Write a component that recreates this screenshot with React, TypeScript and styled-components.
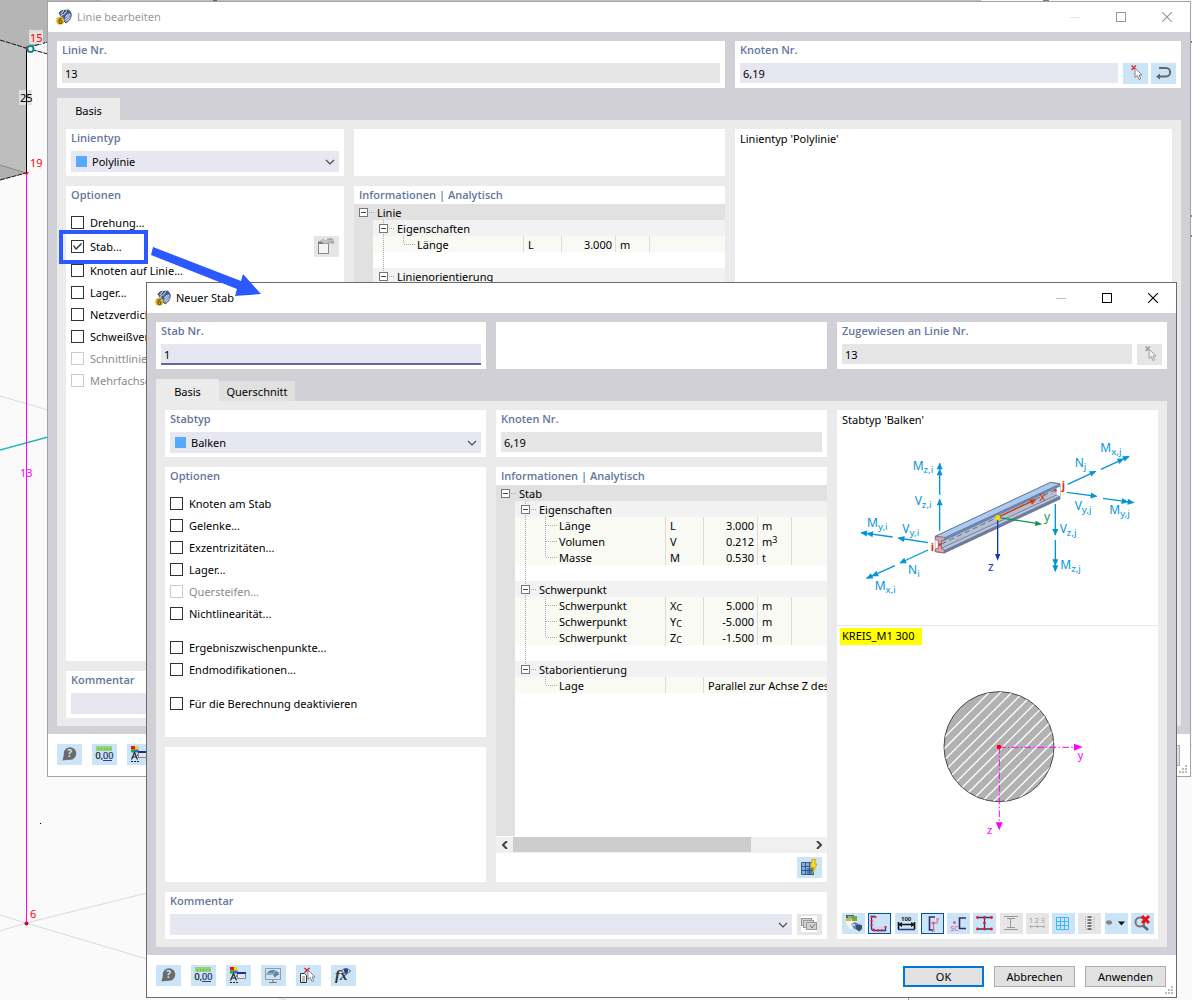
import React, { useId } from 'react';
import styled, { createGlobalStyle, css } from 'styled-components';

const c = {
  frame: '#d1d0d6',
  page: '#ebebeb',
  heading: '#64769e',
  field: '#e7e7f2',
  readOnly: '#e6e6e6',
  accent: '#cce4f7',
  force: '#0095db',
  magenta: '#ff00ff',
};

const GlobalStyle = createGlobalStyle`
  *, *::before, *::after { box-sizing: border-box; }
  body {
    margin: 0;
    background: #fafafa;
    color: #000;
    font-family: "Noto Sans", "Open Sans", sans-serif;
    font-size: 11px;
    line-height: 16px;
  }
  button, input, select { font: inherit; color: inherit; margin: 0; }
`;

/* ---------- desktop and windows ---------- */

const Desktop = styled.main`
  position: relative;
  min-height: 100vh;
  overflow: hidden;
`;

const Scene = styled.svg`
  position: absolute;
  inset: 0;
  width: 100%;
  height: 100%;
`;

const Annotation = styled(Scene)`
  pointer-events: none;
`;

const Dialog = styled.section<{ $active?: boolean; $left: number; $right: number; $top: number }>`
  position: absolute;
  top: ${p => p.$top}px;
  left: ${p => p.$left}px;
  right: ${p => p.$right}px;
  border: 1px solid ${p => (p.$active ? '#6b6b6e' : '#a3a3a6')};
  background: #fff;
`;

const TitleBar = styled.header<{ $active?: boolean }>`
  display: flex;
  align-items: center;
  height: 30px;
  padding-left: 8px;
  gap: 5px;
  color: ${p => (p.$active ? '#000' : '#999')};
`;

const Title = styled.h1`
  flex: 1;
  margin: 0;
  font: inherit;
`;

const WindowButtons = styled.div`
  display: flex;
`;

const WindowButton = styled.button`
  display: grid;
  place-items: center;
  width: 46px;
  height: 28px;
  padding: 0;
  border: 0;
  background: none;
  &:disabled { opacity: 0.25; }
`;

const Body = styled.div`
  padding: 9px 9px 8px;
  background: ${c.frame};
`;

const Columns = styled.div<{ $columns: string }>`
  display: grid;
  grid-template-columns: ${p => p.$columns};
  gap: 10px;
`;

const HeaderRow = styled(Columns)`
  margin-bottom: 10px;
`;

const Page = styled(Columns)`
  padding: 9px 9px 8px;
  background: ${c.page};
`;

const Tabs = styled.div`
  display: flex;
  align-items: flex-end;
  height: 22px;
`;

const Tab = styled.button<{ $selected?: boolean }>`
  width: ${p => (p.$selected ? 63 : 76)}px;
  height: ${p => (p.$selected ? 22 : 20)}px;
  padding: ${p => (p.$selected ? 4 : 2)}px 0 0;
  border: 0;
  background: ${p => (p.$selected ? c.page : '#e0e0e0')};
`;

const Column = styled.div`
  display: flex;
  flex-direction: column;
  gap: 10px;
  min-width: 0;
`;

/* ---------- cards and fields ---------- */

const Card = styled.section<{ $minHeight?: number; $grow?: boolean; $wide?: boolean }>`
  display: flex;
  flex-direction: column;
  min-width: 0;
  min-height: ${p => p.$minHeight ?? 47}px;
  background: #fff;
  ${p => p.$grow && css`flex: 1;`}
  ${p => p.$wide && css`grid-column: span 2;`}
`;

const headingStyle = css`
  margin: 0;
  padding: 0 5px;
  font-family: "Open Sans", "Noto Sans", sans-serif;
  font-size: 11px;
  font-weight: 600;
  line-height: 18px;
  color: ${c.heading};
`;

const Heading = styled.h2`${headingStyle}`;
const FieldLabel = styled.label`${headingStyle}`;

const FieldRow = styled.div`
  display: flex;
  gap: 5px;
  padding: 4px 5px 0;
`;

const TextInput = styled.input<{ $focused?: boolean }>`
  flex: 1;
  min-width: 0;
  height: ${p => (p.$focused ? 21 : 20)}px;
  padding: ${p => (p.$focused ? 2 : 1)}px 3px 0;
  border: 0;
  border-bottom: ${p => (p.$focused ? '2px solid #6464a8' : '0')};
  border-radius: 0;
  outline: 0;
  background: ${c.field};
  &:read-only { background: ${c.readOnly}; }
`;

const SelectBox = styled.div`
  display: flex;
  align-items: center;
  flex: 1;
  gap: 5px;
  min-width: 0;
  height: 21px;
  padding: 0 4px 0 5px;
  background: ${c.field};
`;

const Swatch = styled.span`
  width: 11px;
  height: 11px;
  background: #55aaff;
`;

const Select = styled.select`
  flex: 1;
  min-width: 0;
  height: 21px;
  padding: 0;
  border: 0;
  outline: 0;
  appearance: none;
  background: none;
`;

const ButtonGroup = styled.div<{ $gap?: number }>`
  display: flex;
  gap: ${p => p.$gap ?? 3}px;
`;

const IconButton = styled.button`
  flex: none;
  width: 25px;
  height: 21px;
  padding: 0;
  border: 0;
  background: ${c.accent};
  &:disabled { background: ${c.readOnly}; }
  svg { display: block; }
`;

const ToolButton = styled.button<{ $pressed?: boolean }>`
  width: 23px;
  height: 21px;
  padding: 0;
  border: 0;
  outline: ${p => (p.$pressed ? '1px solid #00539c' : '0')};
  outline-offset: -1px;
  background: ${c.accent};
  &:disabled { background: ${c.readOnly}; }
  svg { display: block; }
`;

/* ---------- options ---------- */

const OptionList = styled.div`
  display: flex;
  flex-direction: column;
  gap: 12px;
  padding: 8px 5px 22px;
`;

const OptionGroup = styled.div``;

const OptionRow = styled.div<{ $tall?: boolean }>`
  display: flex;
  align-items: center;
  justify-content: space-between;
  height: ${p => (p.$tall ? 26 : 22)}px;
  > button { margin-bottom: 1px; }
`;

const OptionLabel = styled.label<{ $disabled?: boolean }>`
  display: flex;
  align-items: center;
  gap: 6px;
  white-space: nowrap;
  color: ${p => (p.$disabled ? '#8a8a8a' : '#000')};
`;

const Checkbox = styled.input`
  appearance: none;
  width: 13px;
  height: 13px;
  border: 1px solid #333;
  background: #fff;
  && { margin: 0 0 1px; }
  &:disabled { border-color: #ccc; }
  &:checked::before {
    content: '';
    display: block;
    width: 11px;
    height: 11px;
    background: #333;
    clip-path: polygon(1px 5px, 2px 4px, 4px 7px, 9px 2px, 10px 3px, 4px 9px);
  }
`;

/* ---------- information tree ---------- */

const TreeArea = styled.div`
  flex: 1;
  overflow: hidden;
  background: linear-gradient(to right, #e1e1e1 19px, #fff 19px);
`;

const TreeTable = styled.table`
  width: 100%;
  table-layout: fixed;
  border-collapse: separate;
  border-spacing: 0;
  white-space: nowrap;
`;

const Col = styled.col<{ $width?: number }>`
  width: ${p => (p.$width ? `${p.$width}px` : 'auto')};
`;

const TreeRow = styled.tr<{ $level: number }>`
  height: 16px;
  background: ${p => ['#fff', '#e1e1e1', '#f2f2f2', '#f9faf4'][p.$level]};
`;

const Cell = styled.td<{ $rule?: boolean; $align?: string }>`
  height: 16px;
  padding: 2px ${p => (p.$align === 'right' ? 3 : 0)}px 0 4px;
  border-right: ${p => (p.$rule ? '1px solid #dcdcdc' : '0')};
  text-align: ${p => p.$align ?? 'left'};
  line-height: 14px;
  overflow: hidden;
  sub, sup { font-size: 9px; line-height: 8px; }
  sub { vertical-align: -1px; }
  sup { vertical-align: 3px; }
`;

const NodeCell = styled(Cell)`
  padding: 0;
`;

const Gutter = styled.td`
  padding: 0;
  background: #e1e1e1;
`;

const Node = styled.span`
  display: flex;
  height: 16px;
`;

const NodeName = styled.span`
  padding-top: 2px;
  line-height: 14px;
`;

const ScrollBar = styled.div`
  display: flex;
  height: 16px;
  margin-top: 1px;
  background: #f0f0f0;
`;

const ScrollArrow = styled.button`
  display: grid;
  place-items: center;
  width: 17px;
  height: 15px;
  padding: 0;
  border: 0;
  background: none;
`;

const ScrollTrack = styled.div`
  flex: 1;
  height: 15px;
`;

const ScrollThumb = styled.div`
  width: 80%;
  height: 15px;
  background: #cdcdcd;
`;

const CardActions = styled.div`
  display: flex;
  justify-content: flex-end;
  padding: 4px 5px;
`;

/* ---------- preview ---------- */

const Caption = styled.p`
  margin: 0;
  padding: 1px 5px 3px;
  line-height: 18px;
`;

const Preview = styled.div`
  height: 216px;
  border-bottom: 1px solid #e6e6e6;
`;

const Drawing = styled.svg`
  display: block;
  width: 100%;
`;

const SectionName = styled.span`
  align-self: flex-start;
  min-width: 82px;
  margin: 2px 3px 0;
  padding: 0 2px 2px;
  background: #ff0;
  line-height: 15px;
`;

const ToolStrip = styled.div`
  display: flex;
  justify-content: space-between;
  margin-top: auto;
  padding: 5px 4px 5px 5px;
`;

/* ---------- footer ---------- */

const Footer = styled.footer`
  display: flex;
  justify-content: space-between;
  padding: 10px 10px 10px 9px;
`;

const PushButton = styled.button<{ $primary?: boolean }>`
  width: 81px;
  height: 21px;
  margin-top: 1px;
  padding: 0;
  border: ${p => (p.$primary ? '2px solid #0078d7' : '1px solid #adadad')};
  background: #e1e1e1;
`;

const Grip = styled.svg`
  position: absolute;
  right: 2px;
  bottom: 2px;
`;

/* ---------- icons ---------- */

const AppIcon = () => (
  <svg width="16" height="16" viewBox="0 0 16 16" aria-hidden="true">
    <path d="M3 4 7 1 13 0.500 15.500 4 14.500 9 10 14 5 10Z" fill="#4a6390" />
    <path d="M3 5C4 2 6 1 9 1.500M6 6C7 3 9 2 12 2.500" stroke="#22345a" strokeWidth="1" fill="none" />
    <path d="M5 5 8 1.200M7.500 5.500 11 1.500M4.500 8 7 5" stroke="#c9d8ee" strokeWidth="1.100" />
    <path d="M8 12C7.500 8 9.500 4.500 13.500 3.500L15.200 5C15.500 9 13.500 12 10 14Z" fill="#7f98c2" stroke="#22345a" strokeWidth="0.700" />
    <path d="M9.500 11 14 5M11 12 14.500 8M9.500 8 12 5" stroke="#dbe6f5" strokeWidth="0.800" />
    <circle cx="4.200" cy="11.700" r="4" fill="#e4b92e" />
    <text x="2" y="15" fontSize="8" fontWeight="700" fill="#6b5410">6</text>
  </svg>
);

const Chevron = () => (
  <svg width="10" height="6" viewBox="0 0 10 6" fill="none" stroke="#444" strokeWidth="1.1" aria-hidden="true">
    <path d="M1 1 5 5 9 1" />
  </svg>
);

const Icon = ({ children, w = 25 }: { children: React.ReactNode; w?: number }) => (
  <svg width={w} height="21" viewBox={`0 0 ${w} 21`} fill="none" aria-hidden="true">{children}</svg>
);

const cursorPath = 'M0 0V9.500L2.200 7.500 4 11.500 5.700 10.700 4 7H7Z';

const PickIcon = ({ off }: { off?: boolean }) => (
  <Icon>
    <path d="M8.500 2.500 13 7M13 2.500 8.500 7" stroke={off ? '#999' : '#e0202a'} strokeWidth="1.4" />
    <path d={cursorPath} transform="translate(12 5)" fill={off ? '#eee' : '#fff'} stroke={off ? '#999' : '#777'} strokeWidth="0.9" />
  </Icon>
);

const ReturnIcon = () => (
  <Icon>
    <path d="M8 5H15C20.500 5 20.500 13.500 15 13.500H8" stroke="#666" strokeWidth="2" />
    <path d="M5 13.500 9 10.500V16.500Z" fill="#666" />
  </Icon>
);

const NewItemIcon = () => (
  <Icon>
    <rect x="4.500" y="7.500" width="10" height="10" fill="#f5f5f5" stroke="#888" />
    <path d="M4 6.500H11" stroke="#777" strokeWidth="2" />
    <path d="M6 5 9 3 12 5 14 3 19 3 20 8 17 7 14 7 11 8Z" fill="#c4c4c4" stroke="#aaa" strokeWidth="0.6" />
    <path d="M13 3H18M15 6H20" stroke="#999" />
  </Icon>
);

const HelpIcon = () => (
  <Icon>
    <circle cx="13" cy="9.500" r="6.300" fill="#6b6b6b" />
    <path d="M7 10 5.500 16.500 13 15.500Z" fill="#6b6b6b" />
    <text x="10.300" y="13" fontSize="10" fontWeight="700" fill={c.accent}>?</text>
  </Icon>
);

const UnitsIcon = () => (
  <Icon>
    <rect x="4" y="2" width="16" height="5" fill="#92d47c" />
    <path d="M6.500 4V6M9.500 4V6M12.500 4V6M15.500 4V6M18.500 4V6" stroke="#5fae52" strokeWidth="0.8" />
    <text x="3.500" y="15" fontSize="9" fill="#111" stroke="#111" strokeWidth="0.2">0,<tspan fill="#2b3f8f">00</tspan></text>
    <path d="M11 16.500H20" stroke="#2b3f8f" />
  </Icon>
);

const DisplayIcon = () => (
  <Icon>
    <rect x="4" y="2" width="4" height="3.500" fill="#e8141c" />
    <rect x="8" y="2" width="3.500" height="3.500" fill="#f3d90b" />
    <rect x="4" y="5.500" width="4" height="3" fill="#1fb325" />
    <rect x="8" y="5.500" width="3.500" height="3" fill="#3c62e0" />
    <path d="M4.500 15.500 7.500 8.500 10.500 15.500M5.500 13H9.500M10 11H13" stroke="#222" strokeWidth="1.200" />
    <path d="M4 17.500H12" stroke="#222" strokeDasharray="2 1" />
    <rect x="11.500" y="7.500" width="8" height="6" fill="#dfe5ee" stroke="#888" />
    <path d="M11 8H20" stroke="#202e8c" strokeWidth="2" />
  </Icon>
);

const MonitorIcon = () => (
  <Icon>
    <path d="M4.500 3.500H19.500V14.500H4.500Z" stroke="#999" />
    <path d="M12 15V17M8 17.500H16" stroke="#777" strokeWidth="1.200" />
    <path d="M5 10C7 4 15 3 18.500 9L13.500 12.500 12 9.500Z" fill="#5e86ad" />
    <path d="M5 10C7 8 10 8 12 9.500L15 5" stroke="#c8dcee" strokeWidth="0.7" />
  </Icon>
);

const ListPickIcon = () => (
  <Icon>
    <path d="M4.500 8.500H8.500L10.500 10.500V17.500H4.500Z" fill="#fff" stroke="#333" />
    <path d="M6 12H9M6 14H9M6 16H9" stroke="#555" strokeWidth="0.8" />
    <path d="M8.500 3 13.500 7.500M13.500 3 8.500 7.500" stroke="#e0202a" strokeWidth="1.400" />
    <path d={cursorPath} transform="translate(12 5)" fill="#fff" stroke="#777" strokeWidth="0.9" />
  </Icon>
);

const FormulaIcon = () => (
  <Icon>
    <text x="4" y="15" fontFamily="Liberation Serif, serif" fontStyle="italic" fontWeight="700" fontSize="15" fill="#333">fx</text>
    <path d="M10.500 6C12 3 17.500 3 19.500 6 17.500 9 12 9 10.500 6Z" fill="#dfe3f3" stroke="#2f3b78" strokeWidth="0.9" />
    <circle cx="15" cy="5.800" r="2.200" fill="#2f3b78" />
  </Icon>
);

const GridFlashIcon = () => (
  <Icon>
    <rect x="4.500" y="5.500" width="12" height="12" fill="#7fb0e0" />
    <path d="M10 11H17V18H10Z" fill="#5580b0" />
    <path d="M4.500 5.500H16.500V17.500H4.500ZM8.500 5.500V17.500M12.500 5.500V17.500M4.500 9.500H16.500M4.500 13.500H16.500" stroke="#33527c" strokeWidth="0.9" />
    <path d="M15 2.500H19L17.500 7H20L15.500 17 16.500 10.500H13.500Z" fill="#ffd91c" stroke="#c99a0a" strokeWidth="0.7" />
  </Icon>
);

const CardsIcon = () => (
  <Icon>
    <rect x="4" y="2" width="16" height="16" fill="#fff" />
    <g fill="#d2d2d2" stroke="#999">
      <rect x="4.500" y="4.500" width="10" height="7" />
      <rect x="6.500" y="6.500" width="10" height="7" />
      <rect x="9.500" y="8.500" width="10" height="7" />
    </g>
    <path d="M13 11 15 14 18 10" stroke="#777" />
  </Icon>
);

const toolIcons: { name: string; pressed?: boolean; disabled?: boolean; art: React.ReactNode }[] = [
  {
    name: 'Rendering',
    art: (
      <>
        <path d="M4 2H15V13H4Z" fill="#e6eef0" />
        <path d="M4 8H14V16H7Z" fill="#f1f4f2" />
        <path d="M4 2H12V5H4Z" fill="#3f6f58" /><path d="M9 3H15V8H10Z" fill="#6fae3c" /><path d="M4 5H9V8H4Z" fill="#d7b63e" /><path d="M6 3H9V5H6Z" fill="#7fb0d0" />
        <path d="M9 11 13 9 19 12 18 17 12 16Z" fill="#6486ad" /><path d="M14 12 20 12V16L17 18.500 14 16Z" fill="#37536f" /><path d="M10 11H13V13H10Z" fill="#b9cfe6" />
      </>
    ),
  },
  {
    name: 'Stresspunkte', pressed: true,
    art: (
      <>
        <path d="M3.500 3.500H7.500V12C7.500 13 8 13.500 9 13.500H17.500V17.500H6C4.500 17.500 3.500 16.500 3.500 15Z" fill="#d5d3f5" />
        <path d="M7.500 3.500H3.500V15C3.500 16.500 4.500 17.500 6 17.500H17.500V13.500" stroke="#2b3a70" strokeWidth="1.300" />
        <path d="M3.500 2.500V5M3.500 7V9M3.500 11V13M5 16 7 18M9 17.500H11M13 17.500H15M17.500 13V15M7.500 3V5" stroke="#e8202a" strokeWidth="1.800" />
      </>
    ),
  },
  {
    name: 'Abmessungen',
    art: (
      <>
        <text x="6" y="8" fontSize="6" fontWeight="700" fill="#222">100</text>
        <path d="M3.500 9V16M19.500 9V16M3.500 11.500H19.500" stroke="#111" strokeWidth="1.600" />
        <path d="M3 11.500 7 9V14ZM20 11.500 16 9V14Z" fill="#111" />
        <path d="M3 16.500H20" stroke="#2b3a70" strokeWidth="1.500" />
      </>
    ),
  },
  {
    name: 'Hauptachsen', pressed: true,
    art: (
      <>
        <path d="M14 4H8.500V17H12" stroke="#2b3060" strokeWidth="1.600" />
        <path d="M10 10H17M12.500 10V17" stroke="#e0609a" strokeWidth="1.100" />
        <circle cx="12.500" cy="10" r="1.500" fill="#e0609a" />
        <text x="15" y="8" fontSize="6" fontWeight="700" fill="#e0609a">y</text>
        <text x="11" y="19" fontSize="6" fontWeight="700" fill="#e0609a">z</text>
      </>
    ),
  },
  {
    name: 'Schubmittelpunkt',
    art: (
      <>
        <path d="M19 5H12.500V15.500H19" stroke="#2b3060" strokeWidth="1.600" />
        <circle cx="7.500" cy="9.500" r="1.500" fill="#e0609a" />
        <text x="3.500" y="17.500" fontSize="7" fill="#d0508a">SC</text>
      </>
    ),
  },
  {
    name: 'Profilteile',
    art: (
      <>
        <path d="M4.500 4.500H18.500M11.500 4.500V16M4.500 16H18.500" stroke="#2b3a70" strokeWidth="1.300" />
        <g fill="#f01818"><circle cx="4.500" cy="4.500" r="1.400" /><circle cx="11.500" cy="4.500" r="1.400" /><circle cx="18.500" cy="4.500" r="1.400" /><circle cx="11.500" cy="10" r="1.400" /><circle cx="4.500" cy="16" r="1.400" /><circle cx="11.500" cy="16" r="1.400" /><circle cx="18.500" cy="16" r="1.400" /></g>
      </>
    ),
  },
  {
    name: 'Elemente', disabled: true,
    art: <path d="M4 3.500H18M7 5.500H15M10.500 5.500V14.500M7 14.500H15M4 16.500H18" stroke="#999" />,
  },
  {
    name: 'Nummerierung', disabled: true,
    art: (
      <>
        <text x="3" y="10" fontSize="7" fill="#999">1 2 3</text>
        <path d="M4 13.500H18M4.500 12V15M11.500 12V15M18 12V15" stroke="#aaa" />
      </>
    ),
  },
  {
    name: 'Raster',
    art: <path d="M4.500 4.500H16.500V16.500H4.500ZM8.500 4.500V16.500M12.500 4.500V16.500M4.500 8.500H16.500M4.500 12.500H16.500" stroke="#45b5f5" />,
  },
  {
    name: 'Tabelle', disabled: true,
    art: (
      <>
        <path d="M7.500 4V18M16 4V18" stroke="#aaa" strokeDasharray="1 1" />
        <path d="M11.500 3V18" stroke="#777" strokeWidth="4" strokeDasharray="2 1" />
      </>
    ),
  },
  {
    name: 'Drucken',
    art: (
      <>
        <path d="M2 7H6V12H2Z" fill="#aaa" /><path d="M1 9.500H7" stroke="#777" strokeWidth="2" /><path d="M13 8.500H20L16.500 12.500Z" fill="#111" />
      </>
    ),
  },
  {
    name: 'Zoom zurücksetzen',
    art: (
      <>
        <circle cx="9" cy="9" r="4.500" stroke="#777" strokeWidth="2" />
        <path d="M12 12.500 17 17" stroke="#666" strokeWidth="2.500" />
        <path d="M11 3 18 10M18 3 11 10" stroke="#e81010" strokeWidth="3" />
      </>
    ),
  },
];

/* ---------- shared parts ---------- */

const MinusBox = ({ x }: { x: number }) => (
  <>
    <rect x={x + 0.5} y="4.500" width="8" height="8" fill="#fff" stroke="#777" />
    <path d={`M${x + 2} 8.500H${x + 7}`} stroke="#444" />
  </>
);

type TreeItem = {
  level: 0 | 1 | 2 | 3;
  name?: string;
  symbol?: React.ReactNode;
  value?: string;
  unit?: React.ReactNode;
  last?: boolean;
  text?: string;
};

const dots = { stroke: '#aaa', strokeDasharray: '1 1', fill: 'none' };

const Tree = ({ items, label }: { items: TreeItem[]; label: string }) => {
  const lastGroup = items.map(i => i.level).lastIndexOf(2);
  return (
    <TreeTable aria-label={label}>
      <colgroup>
        <Col $width={19} /><Col $width={151} /><Col $width={38} /><Col $width={54} /><Col $width={34} /><Col />
      </colgroup>
      <tbody>
        {items.map((it, i) => {
          if (it.level === 1) {
            return (
              <TreeRow key={i} $level={1}>
                <NodeCell colSpan={6}>
                  <Node>
                    <svg width="23" height="16" aria-hidden="true"><MinusBox x={5} /><path d="M15 8.500H20" {...dots} /></svg>
                    <NodeName>{it.name}</NodeName>
                  </Node>
                </NodeCell>
              </TreeRow>
            );
          }
          if (it.level === 2) {
            return (
              <TreeRow key={i} $level={2}>
                <Gutter />
                <NodeCell colSpan={5}>
                  <Node>
                    <svg width="24" height="16" aria-hidden="true">
                      <path d={i === lastGroup ? 'M10.500 0V4' : 'M10.500 0V16'} {...dots} />
                      <MinusBox x={6} />
                      <path d="M16 8.500H22" {...dots} />
                    </svg>
                    <NodeName>{it.name}</NodeName>
                  </Node>
                </NodeCell>
              </TreeRow>
            );
          }
          const trunk = i < lastGroup ? 'M10.500 0V16' : '';
          if (it.level === 0) {
            return (
              <TreeRow key={i} $level={0}>
                <Gutter />
                <NodeCell colSpan={5}>
                  <Node><svg width="24" height="16" aria-hidden="true"><path d={trunk} {...dots} /></svg></Node>
                </NodeCell>
              </TreeRow>
            );
          }
          return (
            <TreeRow key={i} $level={3}>
              <Gutter />
              <NodeCell $rule>
                <Node>
                  <svg width="44" height="16" aria-hidden="true">
                    <path d={`${trunk}M30.500 0V${it.last ? 8 : 16}M31 8.500H42`} {...dots} />
                  </svg>
                  <NodeName>{it.name}</NodeName>
                </Node>
              </NodeCell>
              <Cell $rule>{it.symbol}</Cell>
              {it.text ? (
                <Cell colSpan={3}>{it.text}</Cell>
              ) : (
                <>
                  <Cell $rule $align="right">{it.value}</Cell>
                  <Cell $rule>{it.unit}</Cell>
                  <Cell />
                </>
              )}
            </TreeRow>
          );
        })}
      </tbody>
    </TreeTable>
  );
};

const Option = ({ label, checked, disabled }: { label: string; checked?: boolean; disabled?: boolean }) => (
  <OptionLabel $disabled={disabled}>
    <Checkbox type="checkbox" defaultChecked={checked} disabled={disabled} />
    {label}
  </OptionLabel>
);

type FieldProps = { label: string; value: string; readOnly?: boolean; focused?: boolean; children?: React.ReactNode };

const Field = ({ label, value, readOnly, focused, children }: FieldProps) => {
  const id = useId();
  return (
    <Card>
      <FieldLabel htmlFor={id}>{label}</FieldLabel>
      <FieldRow>
        <TextInput id={id} defaultValue={value} readOnly={readOnly} $focused={focused} />
        {children}
      </FieldRow>
    </Card>
  );
};

const Choice = ({ label, value, wide, children }: { label: string; value?: string; wide?: boolean; children?: React.ReactNode }) => {
  const id = useId();
  return (
    <Card $wide={wide}>
      <FieldLabel htmlFor={id}>{label}</FieldLabel>
      <FieldRow>
        <SelectBox>
          {value && <Swatch />}
          <Select id={id} defaultValue={value ?? ''}>
            <option value={value ?? ''}>{value ?? ''}</option>
          </Select>
          <Chevron />
        </SelectBox>
        {children}
      </FieldRow>
    </Card>
  );
};

const Bar = ({ title, active }: { title: string; active?: boolean }) => (
  <TitleBar $active={active}>
    <AppIcon />
    <Title>{title}</Title>
    <WindowButtons>
      <WindowButton disabled aria-label="Minimieren">
        <svg width="10" height="10"><path d="M0 5.500H10" stroke="currentColor" /></svg>
      </WindowButton>
      <WindowButton aria-label="Maximieren">
        <svg width="10" height="10"><rect x="0.500" y="0.500" width="9" height="9" fill="none" stroke="currentColor" /></svg>
      </WindowButton>
      <WindowButton aria-label="Schließen">
        <svg width="10" height="10"><path d="M0 0 10 10M10 0 0 10" stroke="currentColor" strokeWidth="1.100" /></svg>
      </WindowButton>
    </WindowButtons>
  </TitleBar>
);

const DialogFooter = () => (
  <Footer>
    <ButtonGroup $gap={10}>
      <IconButton aria-label="Hilfe"><HelpIcon /></IconButton>
      <IconButton aria-label="Einheiten"><UnitsIcon /></IconButton>
      <IconButton aria-label="Anzeige"><DisplayIcon /></IconButton>
      <IconButton aria-label="Ansicht"><MonitorIcon /></IconButton>
      <IconButton aria-label="Auswahl übernehmen"><ListPickIcon /></IconButton>
      <IconButton aria-label="Formel"><FormulaIcon /></IconButton>
    </ButtonGroup>
    <ButtonGroup $gap={10}>
      <PushButton $primary>OK</PushButton>
      <PushButton>Abbrechen</PushButton>
      <PushButton>Anwenden</PushButton>
    </ButtonGroup>
    <Grip width="9" height="9" fill="#bbb" aria-hidden="true">
      <path d="M6 0h2v2h-2zM3 3h2v2h-2zM6 3h2v2h-2zM0 6h2v2h-2zM3 6h2v2h-2zM6 6h2v2h-2z" />
    </Grip>
  </Footer>
);

/* ---------- drawings ---------- */

const Force = ({ from, to, double }: { from: [number, number]; to: [number, number]; double?: boolean }) => {
  const [x1, y1] = from;
  const [x2, y2] = to;
  const angle = (Math.atan2(y2 - y1, x2 - x1) * 180) / Math.PI;
  return (
    <g stroke={c.force} fill={c.force}>
      <path d={`M${x1} ${y1}L${x2} ${y2}`} strokeWidth="4" />
      <g transform={`translate(${x2} ${y2}) rotate(${angle})`} stroke="none">
        <path d="M2 0-18-9V9Z" />
        {double && <path d="M-16 0-36-9V9Z" />}
      </g>
    </g>
  );
};

const ForceLabel = ({ x, y, name, index }: { x: number; y: number; name: string; index: string }) => (
  <text x={x} y={y} fontSize="36" fill={c.force}>{name}<tspan dy="9" fontSize="29">{index}</tspan></text>
);

const BeamDrawing = () => (
  <Drawing viewBox="-9 66 963 570" role="img" aria-label="Balken mit Schnittgrößen">
    <path d="M286 379 632 217 660 221 660 267 312 429 286 425Z" fill="#8d9cbb" stroke="#4d556c" strokeWidth="2" />
    <path d="M286 379 632 217 660 222 314 383Z" fill="#a9cbf2" stroke="#56617c" strokeWidth="2" />
    <path d="M314 383 660 222V231L314 392Z" fill="#7184ad" />
    <path d="M306 396 650 234V255L306 414Z" fill="#b4bed3" />
    <path d="M306 414 650 255 660 259 314 421Z" fill="#b9c6dc" stroke="#5d6781" strokeWidth="2" />
    <path d="M314 421 660 259V267L314 429Z" fill="#6d7ca0" />
    <path d="M650 234 660 230V259L650 255Z" fill="#fff" />
    <path d="M286 388 295 392V414L286 417Z" fill="#fff" />
    <path d="M286 379 314 382V390L304 392V415L314 420V429L286 425V417L295 414V392L286 388Z" fill="#d9a3ac" stroke="#805560" strokeWidth="2" />
    <path d="M304 402 645 240" stroke="#3e4354" strokeWidth="2" strokeDasharray="16 10" />

    <Force from={[299, 254]} to={[299, 160]} double />
    <Force from={[299, 362]} to={[299, 268]} />
    <Force from={[158, 381]} to={[63, 368]} double />
    <Force from={[264, 398]} to={[175, 384]} />
    <Force from={[264, 420]} to={[180, 459]} />
    <Force from={[165, 467]} to={[80, 505]} double />
    <Force from={[683, 223]} to={[767, 184]} />
    <Force from={[783, 178]} to={[867, 139]} double />
    <Force from={[681, 247]} to={[770, 259]} />
    <Force from={[789, 265]} to={[881, 278]} double />
    <Force from={[646, 282]} to={[646, 375]} />
    <Force from={[646, 390]} to={[646, 484]} double />

    <path d="M473 322 580 272" stroke="#d23a0e" strokeWidth="4" /><path d="M590 267 568 269 576 284Z" fill="#d23a0e" />
    <path d="M473 322 590 340" stroke="#0a9a49" strokeWidth="4" /><path d="M607 343 587 332 585 348Z" fill="#0a9a49" />
    <path d="M473 322V436" stroke="#1436b5" strokeWidth="4" /><path d="M473 452 465 432H481Z" fill="#1436b5" />
    <circle cx="473" cy="323" r="8" fill="#f7d800" />
    <circle cx="299" cy="404" r="4" fill="#d23a0e" /><circle cx="646" cy="241" r="4" fill="#d23a0e" />

    <g fontSize="34" fontWeight="700" fill="#d23a0e"><text x="272" y="424">i</text><text x="665" y="238">j</text></g>
    <text x="598" y="274" fontSize="36" fill="#d23a0e">x</text>
    <text x="612" y="332" fontSize="36" fill="#0a9a49">y</text>
    <text x="444" y="482" fontSize="36" fill="#1436b5">z</text>

    <ForceLabel x={218} y={180} name="M" index="z,i" />
    <ForceLabel x={224} y={286} name="V" index="z,i" />
    <ForceLabel x={81} y={351} name="M" index="y,i" />
    <ForceLabel x={187} y={370} name="V" index="y,i" />
    <ForceLabel x={204} y={491} name="N" index="i" />
    <ForceLabel x={104} y={541} name="M" index="x,i" />
    <ForceLabel x={781} y={125} name="M" index="x,j" />
    <ForceLabel x={704} y={172} name="N" index="j" />
    <ForceLabel x={704} y={299} name="V" index="y,j" />
    <ForceLabel x={808} y={312} name="M" index="y,j" />
    <ForceLabel x={659} y={368} name="V" index="z,j" />
    <ForceLabel x={661} y={476} name="M" index="z,j" />
  </Drawing>
);

const SectionDrawing = () => (
  <Drawing viewBox="-9 60 963 600" role="img" aria-label="Kreisquerschnitt">
    <defs>
      <clipPath id="round"><circle cx="477" cy="365" r="164" /></clipPath>
    </defs>
    <circle cx="477" cy="365" r="165" fill="#b2b2b2" stroke="#4a4a4a" strokeWidth="3" />
    <g clipPath="url(#round)" stroke="#fff" strokeWidth="4">
      {Array.from({ length: 14 }, (_, i) => {
        const sum = 650 + i * 34;
        return <path key={i} d={`M${sum - 560} 560 ${sum - 180} 180`} />;
      })}
    </g>
    <path d="M477 367H702M478 366V594" fill="none" stroke={c.magenta} strokeWidth="3" strokeDasharray="20 7 4 7" />
    <path d="M702 356 728 366 702 377ZM467 592H488L478 616Z" fill={c.magenta} />
    <circle cx="477" cy="366" r="7" fill="#f00" />
    <text x="713" y="402" fontSize="33" fill={c.magenta}>y</text>
    <text x="441" y="626" fontSize="33" fill={c.magenta}>z</text>
  </Drawing>
);

const ModelScene = () => (
  <Scene aria-hidden="true">
    <path d="M0 0H981V2H48V42L26 48V173L0 180Z" fill="#bebebe" />
    <path d="M0 0H98V2H48V42L26 48 0 40Z" fill="#b5b5b5" />
    <path d="M0 165 26 173 0 180Z" fill="#b0b0b0" />
    <path d="M0 165 26 173M98 0V2" stroke="#888" fill="none" />
    <path d="M0 40 26 48 48 42M26 48 48 54M0 180 26 173" stroke="#111" strokeDasharray="5 1" fill="none" />
    <path d="M26.500 48V173" stroke="#000" />
    <path d="M213 1H217M1043 1H1049M1191 42H1192M1191 216H1192M1191 236H1192" stroke="#000" strokeWidth="1" />
    <path d="M0 396 48 410M0 915 26 923 147 959M0 931 26 923 147 893M278 998 290 1001M1190 745H1192" stroke="#dadada" fill="none" />
    <path d="M908.500 997V1000" stroke="#999" />
    <path d="M0 450 48 437" stroke="#25b9b9" strokeWidth="1.500" />
    <path d="M26.500 173V923" stroke={c.magenta} />
    <rect x="29" y="30" width="14" height="14" fill="#e0e0e0" />
    <rect x="19" y="90" width="13" height="15" fill="#e0e0e0" />
    <rect x="19" y="466" width="15" height="15" fill="#fafafa" />
    <path d="M26.500 48V173" stroke="#000" />
    <path d="M26.500 466V481" stroke={c.magenta} />
    <path d="M24 48 27 46V50ZM24 173 29 172 27 175Z" fill="#f00" />
    <circle cx="30.500" cy="49" r="3" fill="#fff" stroke="#0a8f8f" strokeWidth="2" />
    <circle cx="26.500" cy="923.500" r="2" fill="#e00030" />
    <path d="M40 823.500H41" stroke="#000" />
    <g fontSize="11">
      <g fill="#f00"><text x="30" y="42">15</text><text x="30" y="167">19</text><text x="30" y="918">6</text></g>
      <text x="20" y="102" fill="#000">25</text>
      <text x="20" y="477" fill={c.magenta}>13</text>
    </g>
  </Scene>
);

/* ---------- data ---------- */

const lineTree: TreeItem[] = [
  { level: 1, name: 'Linie' },
  { level: 2, name: 'Eigenschaften' },
  { level: 3, name: 'Länge', symbol: 'L', value: '3.000', unit: 'm', last: true },
  { level: 0 },
  { level: 2, name: 'Linienorientierung' },
];

const memberTree: TreeItem[] = [
  { level: 1, name: 'Stab' },
  { level: 2, name: 'Eigenschaften' },
  { level: 3, name: 'Länge', symbol: 'L', value: '3.000', unit: 'm' },
  { level: 3, name: 'Volumen', symbol: 'V', value: '0.212', unit: <>m<sup>3</sup></> },
  { level: 3, name: 'Masse', symbol: 'M', value: '0.530', unit: 't', last: true },
  { level: 0 },
  { level: 2, name: 'Schwerpunkt' },
  { level: 3, name: 'Schwerpunkt', symbol: <>X<sub>C</sub></>, value: '5.000', unit: 'm' },
  { level: 3, name: 'Schwerpunkt', symbol: <>Y<sub>C</sub></>, value: '-5.000', unit: 'm' },
  { level: 3, name: 'Schwerpunkt', symbol: <>Z<sub>C</sub></>, value: '-1.500', unit: 'm', last: true },
  { level: 0 },
  { level: 2, name: 'Staborientierung' },
  { level: 3, name: 'Lage', text: 'Parallel zur Achse Z des', last: true },
];

const lineOptions = [
  { label: 'Drehung...' },
  { label: 'Stab...', checked: true },
  { label: 'Knoten auf Linie...' },
  { label: 'Lager...' },
  { label: 'Netzverdichtung...' },
  { label: 'Schweißverbindung...' },
  { label: 'Schnittlinie...', disabled: true },
  { label: 'Mehrfachschnitt...', disabled: true },
];

const memberOptions = [
  [
    { label: 'Knoten am Stab' },
    { label: 'Gelenke...' },
    { label: 'Exzentrizitäten...' },
    { label: 'Lager...' },
    { label: 'Quersteifen...', disabled: true },
    { label: 'Nichtlinearität...' },
  ],
  [{ label: 'Ergebniszwischenpunkte...' }, { label: 'Endmodifikationen...' }],
  [{ label: 'Für die Berechnung deaktivieren' }],
];

/* ---------- dialogs ---------- */

const LineDialog = () => (
  <Dialog $left={47} $right={1} $top={1} aria-label="Linie bearbeiten">
    <Bar title="Linie bearbeiten" />
    <Body>
      <HeaderRow $columns="668fr 446fr">
        <Field label="Linie Nr." value="13" readOnly />
        <Field label="Knoten Nr." value="6,19">
          <ButtonGroup>
            <IconButton aria-label="Knoten wählen"><PickIcon /></IconButton>
            <IconButton aria-label="Umkehren"><ReturnIcon /></IconButton>
          </ButtonGroup>
        </Field>
      </HeaderRow>
      <Tabs><Tab $selected>Basis</Tab></Tabs>
      <Page $columns="278fr 371fr 437fr">
        <Column>
          <Choice label="Linientyp" value="Polylinie" />
          <Card $minHeight={475}>
            <Heading>Optionen</Heading>
            <OptionList>
              <OptionGroup>
                {lineOptions.map(o => (
                  <OptionRow key={o.label} $tall={o.checked}>
                    <Option {...o} />
                    {o.checked && <IconButton disabled aria-label="Neuer Stab"><NewItemIcon /></IconButton>}
                  </OptionRow>
                ))}
              </OptionGroup>
            </OptionList>
          </Card>
        </Column>
        <Column>
          <Card />
          <Card $grow>
            <Heading>Informationen | Analytisch</Heading>
            <TreeArea><Tree items={lineTree} label="Linie" /></TreeArea>
          </Card>
        </Column>
        <Card><Caption>Linientyp 'Polylinie'</Caption></Card>
        <Choice label="Kommentar" wide />
      </Page>
    </Body>
    <DialogFooter />
  </Dialog>
);

const MemberDialog = () => (
  <Dialog $active $left={146} $right={15} $top={282} aria-label="Neuer Stab">
    <Bar title="Neuer Stab" active />
    <Body>
      <HeaderRow $columns="330fr 331fr 330fr">
        <Field label="Stab Nr." value="1" focused />
        <Card />
        <Field label="Zugewiesen an Linie Nr." value="13" readOnly>
          <IconButton disabled aria-label="Linie wählen"><PickIcon off /></IconButton>
        </Field>
      </HeaderRow>
      <Tabs>
        <Tab $selected>Basis</Tab>
        <Tab>Querschnitt</Tab>
      </Tabs>
      <Page $columns="662fr 321fr">
        <Column>
          <Columns $columns="321fr 331fr">
            <Column>
              <Choice label="Stabtyp" value="Balken" />
              <Card>
                <Heading>Optionen</Heading>
                <OptionList>
                  {memberOptions.map((group, i) => (
                    <OptionGroup key={i}>
                      {group.map(o => <OptionRow key={o.label}><Option {...o} /></OptionRow>)}
                    </OptionGroup>
                  ))}
                </OptionList>
              </Card>
              <Card $minHeight={135} />
            </Column>
            <Column>
              <Field label="Knoten Nr." value="6,19" readOnly />
              <Card $grow>
                <Heading>Informationen | Analytisch</Heading>
                <TreeArea><Tree items={memberTree} label="Stab" /></TreeArea>
                <ScrollBar>
                  <ScrollArrow aria-label="Nach links">
                    <svg width="6" height="8" fill="none"><path d="M5 0 1 4 5 8" stroke="#444" strokeWidth="2" /></svg>
                  </ScrollArrow>
                  <ScrollTrack><ScrollThumb /></ScrollTrack>
                  <ScrollArrow aria-label="Nach rechts">
                    <svg width="6" height="8" fill="none"><path d="M1 0 5 4 1 8" stroke="#444" strokeWidth="2" /></svg>
                  </ScrollArrow>
                </ScrollBar>
                <CardActions><IconButton aria-label="Neu berechnen"><GridFlashIcon /></IconButton></CardActions>
              </Card>
            </Column>
          </Columns>
          <Choice label="Kommentar">
            <IconButton disabled aria-label="Kommentare verwalten"><CardsIcon /></IconButton>
          </Choice>
        </Column>
        <Card>
          <Preview>
            <Caption>Stabtyp 'Balken'</Caption>
            <BeamDrawing />
          </Preview>
          <SectionName>KREIS_M1 300</SectionName>
          <SectionDrawing />
          <ToolStrip>
            {toolIcons.map(t => (
              <ToolButton key={t.name} aria-label={t.name} $pressed={t.pressed} disabled={t.disabled}>
                <Icon w={23}>{t.art}</Icon>
              </ToolButton>
            ))}
          </ToolStrip>
        </Card>
      </Page>
    </Body>
    <DialogFooter />
  </Dialog>
);

export default function App() {
  return (
    <>
      <GlobalStyle />
      <Desktop>
        <ModelScene />
        <LineDialog />
        <MemberDialog />
        <Annotation aria-hidden="true">
          <rect x="61" y="232" width="85" height="30" fill="none" stroke="#2b59ff" strokeWidth="4" />
          <path d="M153 247 241 281 243 274 261 294 235 296 237 289 151 255Z" fill="#2b59ff" />
        </Annotation>
      </Desktop>
    </>
  );
}
